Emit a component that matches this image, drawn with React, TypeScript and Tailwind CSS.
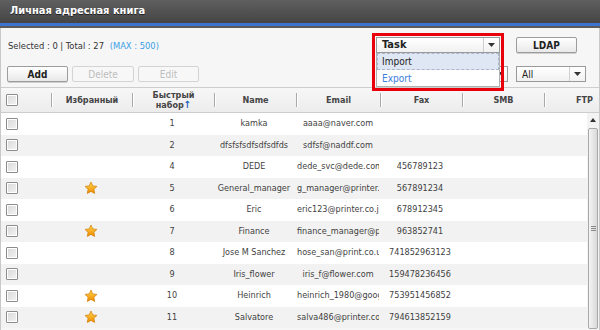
import React from "react";

type Row = { fav: boolean; num: string; name: string; email: string; fax: string };

const rows: Row[] = [
  { fav: false, num: "1", name: "kamka", email: "aaaa@naver.com", fax: "" },
  { fav: false, num: "2", name: "dfsfsfsdfsdfsdfds", email: "sdfsf@naddf.com", fax: "" },
  { fav: false, num: "4", name: "DEDE", email: "dede_svc@dede.com", fax: "456789123" },
  { fav: true, num: "5", name: "General_manager", email: "g_manager@printer.com", fax: "567891234" },
  { fav: false, num: "6", name: "Eric", email: "eric123@printer.co.jp", fax: "678912345" },
  { fav: true, num: "7", name: "Finance", email: "finance_manager@printer.com", fax: "963852741" },
  { fav: false, num: "8", name: "Jose M Sanchez", email: "hose_san@print.co.uk", fax: "741852963123" },
  { fav: false, num: "9", name: "Iris_flower", email: "iris_f@flower.com", fax: "159478236456" },
  { fav: true, num: "10", name: "Heinrich", email: "heinrich_1980@google.com", fax: "753951456852" },
  { fav: true, num: "11", name: "Salvatore", email: "salva486@printer.com", fax: "794613852159" },
];

function Checkbox() {
  return (
    <div className="w-[12px] h-[12px] border border-[#8c8c8c] rounded-[1px] bg-gradient-to-br from-[#d8d8d8] to-[#f4f4f4] shadow-[inset_0_0_0_1px_#ffffff]" />
  );
}

function Star() {
  return (
    <svg width="14" height="14" viewBox="0 0 24 24">
      <defs>
        <linearGradient id="sg" x1="0" y1="0" x2="0" y2="1">
          <stop offset="0" stopColor="#ffd84a" />
          <stop offset="1" stopColor="#f08a00" />
        </linearGradient>
      </defs>
      <path
        d="M12 1.8l3.1 6.6 7.1.9-5.2 4.9 1.3 7.1L12 17.8l-6.3 3.5 1.3-7.1-5.2-4.9 7.1-.9z"
        fill="url(#sg)"
        stroke="#d07a00"
        strokeWidth="1.2"
        strokeLinejoin="round"
      />
    </svg>
  );
}

function Arrow() {
  return (
    <svg width="7" height="4" viewBox="0 0 7 4">
      <path d="M0 0h7L3.5 4z" fill="#333" />
    </svg>
  );
}

function Select({ label, className, bold }: { label: string; className: string; bold?: boolean }) {
  return (
    <div
      className={`h-[16px] flex items-stretch border border-[#9a9a9a] bg-gradient-to-b from-white to-[#f1f1f1] ${className}`}
    >
      <div
        className={`flex-1 flex items-center pl-[5px] text-[#222] ${bold ? "font-bold text-[11px]" : "text-[10px]"}`}
      >
        {label}
      </div>
      <div className="w-[16px] border-l border-[#cfcfcf] flex items-center justify-center">
        <Arrow />
      </div>
    </div>
  );
}

function Button({ label, disabled, w }: { label: string; disabled?: boolean; w: string }) {
  return (
    <div
      className={`h-[16px] ${w} flex items-center justify-center rounded-[2px] border text-[10px] ${
        disabled
          ? "border-[#d4d4d4] bg-[#f7f7f7] text-[#bdbdbd]"
          : "border-[#9c9c9c] bg-gradient-to-b from-white to-[#e9e9e9] text-[#222] font-bold shadow-[0_1px_0_#cfcfcf]"
      }`}
    >
      {label}
    </div>
  );
}

function HeadCell({ children, first }: { children?: React.ReactNode; first?: boolean }) {
  return (
    <div className="flex items-center h-full">
      {!first && <div className="w-[1px] h-[14px] bg-[#a9a9a9] shadow-[1px_0_0_#ffffff] shrink-0" />}
      <div className="flex-1 flex items-center justify-center text-center leading-[10px]">{children}</div>
    </div>
  );
}

export default function App() {
  return (
    <div className="w-[600px] h-[330px] overflow-hidden bg-[#f6f6f6] font-['DejaVu_Sans_Condensed','DejaVu_Sans',sans-serif] text-[#444]">
      {/* Title */}
      <div className="h-[23px] bg-gradient-to-b from-[#5f5f5f] to-[#454545] flex items-center pl-[10px] text-white font-bold text-[11px] [text-shadow:0_1px_0_#222]">
        Личная адресная книга
      </div>
      <div className="h-[3px] bg-[#3a74cf]" />
      <div className="h-[2px] bg-[#5b5b5b]" />

      <div className="border-l border-r border-[#c8c8c8] h-[302px] flex flex-col">
        {/* Row 1 */}
        <div className="mt-[9px] flex items-center justify-between pl-[7px] pr-[22px]">
          <div className="text-[9.3px] text-[#333] mt-[1px]">
            Selected : 0 | Total : 27 <span className="text-[#3aa0e8] ml-[3px]">(MAX : 500)</span>
          </div>
          <div className="flex items-center gap-[16px]">
            <div className="relative z-10">
              <Select label="Task" bold className="w-[124px]" />
              <div className="absolute left-0 top-full w-[124px] h-[34px] border border-t-0 border-[#b0b0b0] bg-white flex flex-col">
                <div className="h-[17px] flex items-center pl-[4px] bg-[#dfe7f4] border border-dashed border-[#a9b6cc] text-[10px] text-[#222]">
                  Import
                </div>
                <div className="h-[17px] flex items-center pl-[5px] text-[10px] text-[#3b80dc]">Export</div>
              </div>
              <div className="absolute left-[-4px] top-[-4px] w-[132px] h-[58px] border-[3px] border-[#e8000b] pointer-events-none" />
            </div>
            <Button label="LDAP" w="w-[61px]" />
          </div>
        </div>

        {/* Row 2 */}
        <div className="mt-[13px] flex items-center justify-between pl-[6px] pr-[13px]">
          <div className="flex items-center gap-[4px]">
            <Button label="Add" w="w-[61px]" />
            <Button label="Delete" disabled w="w-[62px]" />
            <Button label="Edit" disabled w="w-[61px]" />
          </div>
          <div className="flex items-center gap-[8px]">
            <Select label="" className="w-[68px]" />
            <Select label="All" className="w-[70px]" />
          </div>
        </div>

        {/* Table header */}
        <div className="mt-[5px] h-[26px] border-t border-b border-[#cdcdcd] bg-gradient-to-b from-[#f7f7f7] to-[#ececec] overflow-hidden">
          <div className="w-[623px] h-full grid grid-cols-[50px_81px_82px_82px_84px_82px_82px_80px] text-[9px] font-bold text-[#454545]">
            <div className="flex items-center pl-[5px] h-full">
              <Checkbox />
            </div>
            <HeadCell>Избранный</HeadCell>
            <HeadCell>
              <span>
                Быстрый
                <br />
                набор<span className="text-[#1f5fbf] text-[10px]">↑</span>
              </span>
            </HeadCell>
            <HeadCell>Name</HeadCell>
            <HeadCell>Email</HeadCell>
            <HeadCell>Fax</HeadCell>
            <HeadCell>SMB</HeadCell>
            <HeadCell>FTP</HeadCell>
          </div>
        </div>

        {/* Body */}
        <div className="flex flex-1 overflow-hidden">
          <div className="w-[586px] shrink-0">
            {rows.map((r, i) => (
              <div
                key={i}
                className={`h-[21.5px] grid grid-cols-[49px_81px_82px_82px_84px_82px_82px_44px] items-center text-[9px] text-[#3f3f3f] ${
                  i % 2 === 1 ? "bg-[#f2f2f2]" : "bg-white"
                }`}
              >
                <div className="pl-[5px] flex items-center">
                  <Checkbox />
                </div>
                <div className="flex items-center justify-center">{r.fav && <Star />}</div>
                <div className="text-center whitespace-nowrap overflow-hidden">{r.num}</div>
                <div className="text-center whitespace-nowrap overflow-hidden px-[2px]">{r.name}</div>
                <div className="text-center whitespace-nowrap overflow-hidden pl-[2px]">{r.email}</div>
                <div className="text-center whitespace-nowrap overflow-hidden px-[2px]">{r.fax}</div>
                <div />
                <div />
              </div>
            ))}
          </div>
          {/* Scrollbar */}
          <div className="flex-1 bg-[#f3f3f3] flex flex-col items-center pt-[5px]">
            <svg width="6" height="4" viewBox="0 0 6 4">
              <path d="M0 4h6L3 0z" fill="#333" />
            </svg>
            <div className="mt-[6px] w-[10px] flex-1 mb-[1px] rounded-[2px] border border-[#a8a8a8] bg-gradient-to-r from-[#f4f4f4] to-[#d9d9d9] flex flex-col items-center justify-center gap-[1px]">
              <div className="w-[5px] h-[1px] bg-[#888]" />
              <div className="w-[5px] h-[1px] bg-[#888]" />
              <div className="w-[5px] h-[1px] bg-[#888]" />
            </div>
          </div>
        </div>
      </div>
    </div>
  );
}
